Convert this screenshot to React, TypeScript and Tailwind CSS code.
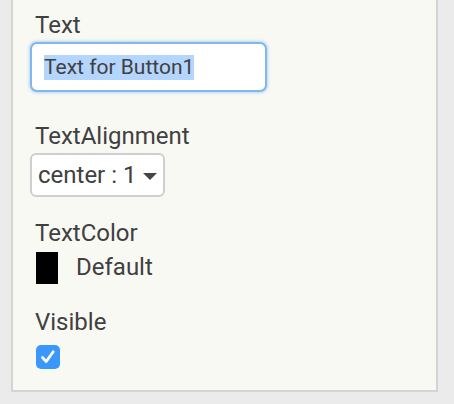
import React from "react";

export default function App() {
  const font = { fontFamily: "Roboto, 'Noto Sans', sans-serif" };
  return (
    <div className="w-[454px] h-[404px] bg-[#ebebeb] overflow-hidden" style={font}>
      <div className="ml-[11px] w-[427px] h-[392px] bg-[#f9f9f4] border-x-2 border-b-2 border-[#d4d4d4] pl-[17px] flex flex-col items-start">
        <div className="mt-[11px] h-[28px] text-[24px] leading-[28px] text-[#404040] pl-[5px]">Text</div>
        <div className="mt-[3px] w-[237px] h-[50px] rounded-[7px] border-2 border-[#82b8ee] bg-white shadow-[0_0_3px_1px_rgba(130,184,238,0.55)] flex items-center pl-[12px]">
          <span className="text-[21px] leading-[25px] text-[#404040] bg-[#b4d5fe]">Text for Button1</span>
        </div>
        <div className="mt-[30px] h-[28px] text-[24px] leading-[28px] text-[#404040] pl-[5px]">TextAlignment</div>
        <div className="mt-[3px] w-[135px] h-[44px] rounded-[6px] border-2 border-[#cfcfcf] bg-white flex items-center pl-[6px]">
          <span className="text-[24px] leading-[28px] text-[#404040]">center : 1</span>
          <svg width="14" height="7" viewBox="0 0 14 7" className="ml-[7px] mt-[2px]">
            <polygon points="0,0 14,0 7,7" fill="#454545" />
          </svg>
        </div>
        <div className="mt-[22px] h-[28px] text-[24px] leading-[28px] text-[#404040] pl-[5px]">TextColor</div>
        <div className="mt-[5px] h-[32px] flex items-start pl-[6px]">
          <div className="w-[22px] h-[32px] bg-black" />
          <span className="ml-[18px] text-[24px] leading-[28px] text-[#404040] mt-[1px]">Default</span>
        </div>
        <div className="mt-[24px] h-[28px] text-[24px] leading-[28px] text-[#404040] pl-[5px]">Visible</div>
        <div className="mt-[9px] ml-[6px] w-[24px] h-[24px] rounded-[5px] bg-[#3a97fb] flex items-center justify-center">
          <svg width="20" height="20" viewBox="0 0 20 20">
            <path d="M4.5 10.5 L8.2 14.5 L15.2 4.8" fill="none" stroke="white" strokeWidth="2.8" strokeLinecap="round" strokeLinejoin="round" />
          </svg>
        </div>
      </div>
    </div>
  );
}
